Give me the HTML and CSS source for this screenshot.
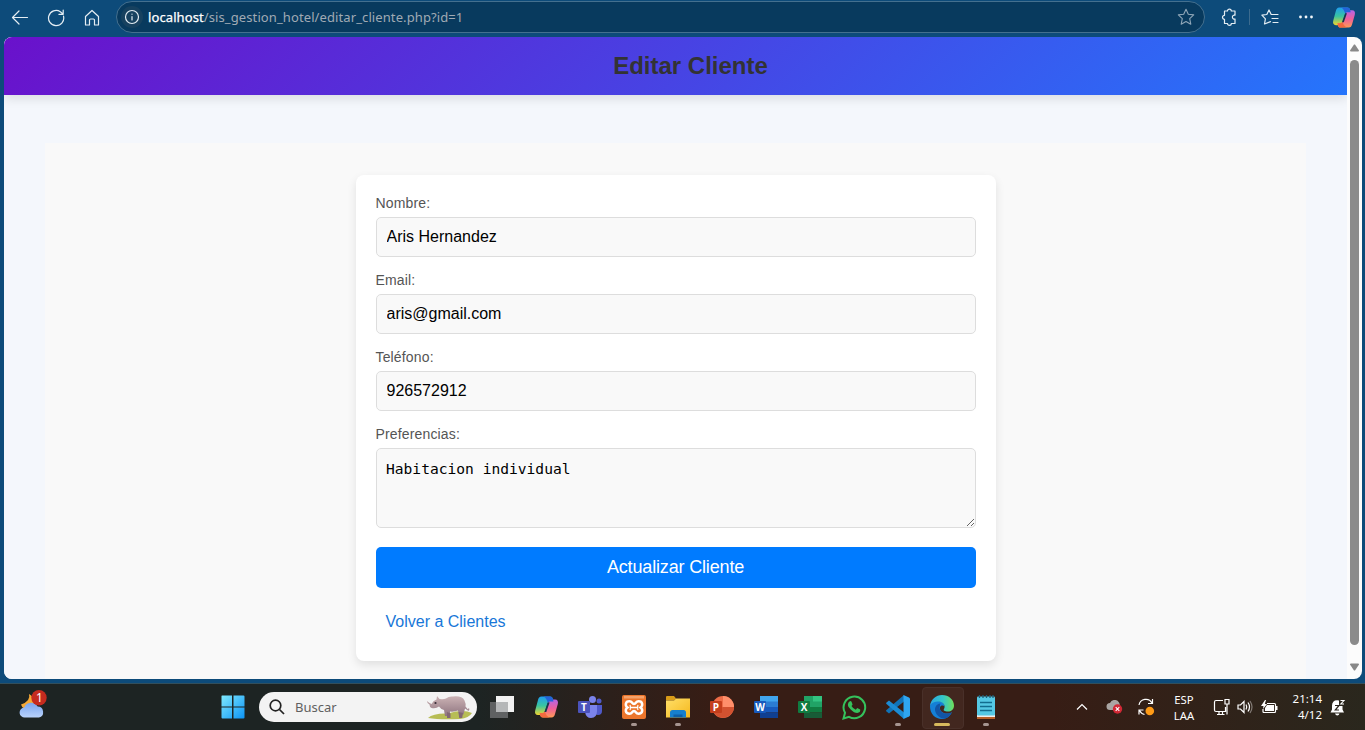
FILE: index.html
```html
<!DOCTYPE html>
<html lang="es">
<head>
<meta charset="utf-8">
<title>Editar Cliente</title>
<link rel="stylesheet" href="styles.css">
</head>
<body>
<svg class="defs" width="0" height="0">
  <defs>
    <linearGradient id="cpA" x1="0" y1="0" x2="0" y2="1"><stop offset="0" stop-color="#1f9df0"/><stop offset=".5" stop-color="#39c5a0"/><stop offset="1" stop-color="#f0d52e"/></linearGradient>
    <linearGradient id="cpB" x1="0" y1="0" x2="0" y2="1"><stop offset="0" stop-color="#b364e8"/><stop offset=".5" stop-color="#ef5f9b"/><stop offset="1" stop-color="#ff9a55"/></linearGradient>
    <linearGradient id="win" x1="0" y1="0" x2="1" y2="1"><stop offset="0" stop-color="#7feaff"/><stop offset="1" stop-color="#0c93f5"/></linearGradient>
    <linearGradient id="cloud" x1="0" y1="0" x2="0" y2="1"><stop offset="0" stop-color="#79a5ef"/><stop offset="1" stop-color="#b9d2fb"/></linearGradient>
    <linearGradient id="folder" x1="0" y1="0" x2="1" y2="1"><stop offset="0" stop-color="#ffdf68"/><stop offset="1" stop-color="#f5b81d"/></linearGradient>
    <linearGradient id="edgeTop" x1="0" y1="0" x2="1" y2="0"><stop offset="0" stop-color="#2aa8e2"/><stop offset=".55" stop-color="#35c6c8"/><stop offset="1" stop-color="#6fe05a"/></linearGradient>
    <linearGradient id="rhino" x1="0" y1="0" x2="0" y2="1"><stop offset="0" stop-color="#ccb3b5"/><stop offset="1" stop-color="#8f7580"/></linearGradient>
    <symbol id="copilot" viewBox="0 0 24 22">
      <path d="M7 .5h8.500c2 0 2.500 1 3 3l.5 2h-3c-2 0-2.600 1-3.100 2.500L10 16.500c-.6 1.800-1.300 2.500-3 2.500H3.500C1 19 0 17 .7 14.500L3.500 4C4 2 5 .5 7 .5z" fill="url(#cpA)"/>
      <path d="M17 21.500H8.500c-2 0-2.500-1-3-3l-.3-1.500h2.500c2 0 2.600-1 3.100-2.500L14 6c.6-1.800 1.300-2.500 3-2.500h3.500C23 3.500 24 5.500 23.300 8L20.500 18c-.5 2-1.500 3.500-3.500 3.500z" fill="url(#cpB)"/>
      <path d="M9 .5h6.500c2 0 2.500 1 3 3l.5 2h-3c-1.500 0-2.200.6-2.700 1.500C12.300 4 11.500 1.500 9 .5z" fill="#2463d8"/>
      <path d="M15 21.500H8.500c-2 0-2.500-1-3-3L5.200 17h2.500c1.500 0 2.200-.6 2.700-1.500.8 3 2.100 5 4.600 6z" fill="#f36a3e"/>
      <path class="gap" d="M13.200 6.500l1.900 0-3.300 9.500-1.900 0z"/>
    </symbol>
  </defs>
</svg>
<div class="desktop">
  <div class="toolbar">
    <div class="nav">
      <svg width="18" height="18" viewBox="0 0 18 18"><path d="M16.500 8.500H1.500M8 2L1.500 8.500 8 15"/></svg>
      <svg width="18" height="18" viewBox="0 0 18 18"><path d="M16.500 7.200A7.600 7.600 0 1 1 13.300 2.700L16 5M16.200 1v4.300h-4.300"/></svg>
      <svg width="18" height="18" viewBox="0 0 18 18"><path d="M2.500 7.500L9 1.500l6.500 6V16H11.500v-5q0-1-1-1h-3q-1 0-1 1v5h-4z"/></svg>
    </div>
    <div class="address">
      <span class="info"><svg width="16" height="16" viewBox="0 0 16 16"><circle cx="8" cy="8" r="6.500"/><path d="M8 7.500V11M8 5v.2"/></svg></span>
      <span class="url"><b>localhost</b>/sis_gestion_hotel/editar_cliente.php?id=1</span>
      <svg class="star" width="18" height="18" viewBox="0 0 18 18"><path d="M9 1.300l2.300 5 5.400.6-4 3.700 1.100 5.600L9 13.500l-4.800 2.700 1.100-5.600-4-3.700 5.400-.6z"/></svg>
    </div>
    <div class="actions">
      <svg class="puzzle" width="18" height="18" viewBox="0 0 18 18"><path d="M4.500 3h3a1.900 1.900 0 0 1 3.800 0H15v4.200a2 2 0 1 0 0 3.800v4.500h-3.700a1.900 1.900 0 0 1-3.800 0h-3v-4.200a2 2 0 1 1 0-4z"/></svg>
      <span class="divider"></span>
      <svg class="favs" width="18" height="18" viewBox="0 0 18 18"><path d="M9.500 13.600L3.500 16l.9-5.200L.9 7.200l4.900-.7L8 2l2.200 4.500H17M11 10.500h6M12 14.500h5"/></svg>
      <svg class="dots" width="16" height="18" viewBox="0 0 16 18"><circle cx="2.500" cy="9" r="1.400"/><circle cx="8" cy="9" r="1.400"/><circle cx="13.500" cy="9" r="1.400"/></svg>
      <svg class="copilot" width="24" height="21"><use href="#copilot"/></svg>
    </div>
  </div>

  <div class="window">
    <div class="page">
      <header class="header"><h2>Editar Cliente</h2></header>
      <main class="container">
        <form class="card">
          <label for="nombre">Nombre:</label>
          <input id="nombre" type="text" value="Aris Hernandez">
          <label for="email">Email:</label>
          <input id="email" type="text" value="aris@gmail.com">
          <label for="telefono">Teléfono:</label>
          <input id="telefono" type="text" value="926572912">
          <label for="pref">Preferencias:</label>
          <textarea id="pref" spellcheck="false">Habitacion individual</textarea>
          <button type="button">Actualizar Cliente</button>
          <a class="back">Volver a Clientes</a>
        </form>
      </main>
    </div>
    <div class="scrollbar">
      <svg width="9" height="8" viewBox="0 0 9 8"><path d="M4 .5h1l4 6q0 1-1 1H1q-1 0-1-1z"/></svg>
      <div class="thumb"></div>
      <svg width="9" height="8" viewBox="0 0 9 8"><path d="M1 .5h7q1 0 1 1l-4 6H4l-4-6q0-1 1-1z"/></svg>
    </div>
  </div>

  <div class="taskbar">
    <div class="weather">
      <svg width="30" height="30" viewBox="0 0 30 30">
        <path d="M11 4q2 7-8 10.500 1.500 5 8 5 6-2 5-8.500Q15 6 11 4z" fill="#f6a935"/>
        <path d="M7 27.500a5 5 0 0 1-.8-10 7.500 7.500 0 0 1 13.500-1A5.600 5.600 0 0 1 21 27.500z" fill="url(#cloud)"/>
        <circle cx="21" cy="7.700" r="7.700" fill="#c52b1f"/>
        <text x="21.500" y="12" text-anchor="middle" class="badge-text">1</text>
      </svg>
    </div>
    <div class="start"><svg width="24" height="24" viewBox="0 0 24 24"><path d="M.5 1q0-.5.500-.5h10v11H.5zM12.500.5h10q1 0 1 1v10h-11zM.5 12.500h10.500v11H1.500q-1 0-1-1zM12.500 12.500h11v10q0 1-1 1h-10z" fill="url(#win)"/></svg></div>
    <div class="search">
      <svg width="16" height="16" viewBox="0 0 16 16"><circle cx="6.500" cy="6.500" r="5.300"/><path d="M10.500 10.500L15 15"/></svg>
      <span>Buscar</span>
      <svg class="rhino" width="46" height="26" viewBox="0 0 46 26">
        <path d="M1 24q5-5 20-4.500 15-4.500 24-.5-3 5-12 6-20 1-32-1z" fill="#b7bd55"/>
        <path d="M0 7q2 2 4.500 3Q6 6.500 9.500 5.500L10 2l2.500 3q4 .5 6.500-.5 3-2.500 7-2 9-1 11.500 4 1.500 3 1 6l2.500 3 .5-1.500 1 1-1 2-3.500-2.500-1.500 6h-4.500l-1-4q-4 1.500-8 1v4.500h-5l-1-6q-3-.5-5-3.500-3 2.500-7.500 1.500-2-1-2-3.500Q0 9.500 0 7z" fill="url(#rhino)"/>
        <path d="M20 18v6h3.500v-4.500M31.500 18l.7 6h3l.8-5" fill="#826874"/><circle cx="8.500" cy="9" r="1.100" fill="#382d37"/>
      </svg>
    </div>
    <div class="apps">
      <div class="app"><svg width="24" height="24" viewBox="0 0 24 24"><path d="M6 1h18v16H6z" fill="#f2f2f2"/><path d="M0 7h18v16H0z" fill="#5f6162"/><path d="M6 7h12v10H6z" fill="#b5b7b8"/></svg></div>
      <div class="app"><svg width="25" height="22"><use href="#copilot"/></svg></div>
      <div class="app"><svg width="24" height="24" viewBox="0 0 24 24"><circle cx="14.500" cy="4.500" r="3.500" fill="#7b83eb"/><circle cx="21" cy="6" r="2.500" fill="#5059c9"/><path d="M17 10h7v6q0 4-4 4-3 0-4-3z" fill="#5059c9"/><path d="M8 10h11v6q0 7-6 7-5 0-6-6z" fill="#7b83eb"/><rect y="6" width="12" height="12" rx="1" fill="#4b53bc"/><text x="6" y="15.500" class="tile-text">T</text></svg></div>
      <div class="app run"><svg width="24" height="24" viewBox="0 0 24 24"><rect width="24" height="24" rx="2" fill="#ec762c"/><path d="M2 1h20v2.500H2z" fill="#f4a26b"/><path d="M7.500 6.300c3 0 2.300 2.700 4.500 2.700s1.500-2.700 4.500-2.700c4.500 0 4.500 4.500 2 6.200 2.500 1.700 2.500 6.200-2 6.200-3 0-2.300-2.700-4.500-2.700s-1.500 2.700-4.500 2.700c-4.500 0-4.500-4.500-2-6.200-2.500-1.700-2.500-6.200 2-6.200z" fill="none" stroke="#fff" stroke-width="2.500"/><path d="M8 10q1 2.500 0 5M16 10q-1 2.500 0 5M8.500 12.500h7" fill="none" stroke="#fff" stroke-width="1.300"/></svg></div>
      <div class="app run"><svg width="24" height="24" viewBox="0 0 24 24"><path d="M0 2q0-1 1-1h7l2 2.500-2 2H0z" fill="#d89b18"/><path d="M0 5.500h8l2-2h14V22.500H0z" fill="url(#folder)"/><path d="M4 22.500v-5q0-2.500 2.500-2.500h11q2.500 0 2.500 2.500v5z" fill="#167fce"/><path d="M7.500 22v-2.500h9V22z" fill="#0d5fa8"/></svg></div>
      <div class="app"><svg width="24" height="24" viewBox="0 0 24 24"><circle cx="13" cy="12" r="11" fill="#ed6c47"/><path d="M13 1a11 11 0 0 1 11 11H13z" fill="#ff8f6b"/><path d="M24 12a11 11 0 0 1-21.500 3L13 12z" fill="#d35230"/><rect y="6" width="12" height="12" rx="1" fill="#c43e1c"/><text x="6" y="15.500" class="tile-text">P</text></svg></div>
      <div class="app"><svg width="24" height="24" viewBox="0 0 24 24"><path d="M6 1h18v6H6z" fill="#41a5ee"/><path d="M6 6.500h18V12H6z" fill="#2b7cd3"/><path d="M6 12h18v5.500H6z" fill="#185abd"/><path d="M6 17.500h18V23H6z" fill="#103f91"/><rect y="6" width="12" height="12" rx="1" fill="#185abd"/><text x="6" y="15.500" class="tile-text">W</text></svg></div>
      <div class="app"><svg width="24" height="24" viewBox="0 0 24 24"><path d="M6 1h9v6H6z" fill="#21a366"/><path d="M15 1h9v6h-9z" fill="#33c481"/><path d="M6 6.500h18V12H6z" fill="#21a366"/><path d="M6 12h18v5.500H6z" fill="#107c41"/><path d="M6 17.500h18V23H6z" fill="#185c37"/><rect y="6" width="12" height="12" rx="1" fill="#107c41"/><text x="6" y="15.500" class="tile-text">X</text></svg></div>
      <div class="app"><svg width="25" height="25" viewBox="0 0 25 25"><path d="M1.500 23.500l1.500-5.700a10.800 10.800 0 1 1 4 4z" fill="none" stroke="#35c25c" stroke-width="2"/><path d="M7.500 6.500q1-.8 1.900 0l1.100 2.700q.2.600-1 1.800 1.500 2.700 4.300 3.700l1.400-1.700 3 1.500q.5 3-3 3.500-3 0-6.500-3.500T6 9q.2-1.600 1.500-2.500z" fill="#35c25c"/></svg></div>
      <div class="app run"><svg width="24" height="24" viewBox="0 0 24 24"><path d="M18 0v6.500L3 18.500.5 16.500q-.8-.8 0-1.500z" fill="#1073b8"/><path d="M18 24v-6.500L3 5.500.5 7.500q-.8.800 0 1.500z" fill="#1b8bd4"/><path d="M17.500 0l5.500 2.500q1 .5 1 1.500v16q0 1-1 1.500L17.500 24z" fill="#2fa5f0"/></svg></div>
      <div class="app active"><svg width="24" height="24" viewBox="0 0 24 24"><path d="M0 11.500C0 7 4 5.500 8.500 6c4 .5 6 2.500 6 5.500-1-1.500-4-1.500-4.500 1-.5 3.500 3 6 6.500 6 2.500 0 4-.5 5.500-1.500C20 21.500 16 24 12 24 5 24 0 18.500 0 11.500z" fill="#1580d6"/><path d="M10.500 8.500C6 9 4 13 5.500 17c1.500 4 5 6.500 9 6.700 3.500-1 6-3.300 7.300-6.400-5 3-11.300 1-12-3.500-.3-2 .2-4 .7-5.300z" fill="#1155a6"/><path d="M0 11C1 4 6 0 12 0c7 0 12 5 12 10.500 0 4-3 6-6 6-3.500 0-5-1-4-2.500 2-3.500-1-7.500-5.500-7.500C5 6.500 1.500 7.500 0 11z" fill="url(#edgeTop)"/></svg></div>
      <div class="app run"><svg width="20" height="24" viewBox="0 0 20 24"><path d="M1 20h18v4H1z" fill="#b75f28"/><path d="M1 19h18v3H1z" fill="#eee"/><rect x="1" y="1.500" width="18" height="19" rx="1" fill="#55c8e4"/><path d="M3.500 0v3M7 0v3M10.500 0v3M14 0v3M17 0v3" stroke="#1f5f77" stroke-width="1.300"/><path d="M4 7.500h12M4 11.500h12M4 15.500h12" stroke="#126c8e" stroke-width="1.500"/></svg></div>
    </div>
    <div class="tray">
      <svg class="chev" width="12" height="8" viewBox="0 0 12 8"><path d="M1 6.500l5-5 5 5"/></svg>
      <svg class="onedrive" width="17" height="14" viewBox="0 0 17 14"><path d="M4 10a3.500 3.500 0 0 1 0-7 5 5 0 0 1 9-.5q2 3-1 7.500z" fill="#aaa5a3"/><circle cx="11.500" cy="9" r="4.700" fill="#d22835"/><path d="M9.700 7.200l3.600 3.600M13.300 7.200L9.700 10.800" stroke="#fff" stroke-width="1.100"/></svg>
      <svg class="sync" width="18" height="18" viewBox="0 0 18 18"><path d="M2 7a7 7 0 0 1 13-2M15.500 1v4.500H11M2 16.500V12h4.500M2.500 12.500q2 3.500 5 4"/><circle cx="12.800" cy="13" r="4.300" fill="#ff9b17" stroke="none"/></svg>
      <div class="lang"><span>ESP</span><span>LAA</span></div>
      <svg class="net" width="17" height="18" viewBox="0 0 17 18"><path d="M10 2.500H3q-1.500 0-1.500 1.500v8q0 1.500 1.500 1.500h9.500V9M4 16.500h7.500M6 13.500v3M9.500 13.500v3M12 1.500h4v4.500h-4zM14 6v10.500"/></svg>
      <svg class="vol" width="16" height="14" viewBox="0 0 16 14"><path d="M1 5h2.500L7 1.500v11L3.500 9H1zM9 4.500q1.500 2.500 0 5M11 2.500q3 4.500 0 9"/><path d="M13 1q4 6 0 12" opacity=".4"/></svg>
      <svg class="bat" width="17" height="14" viewBox="0 0 17 14"><path d="M6 3.500h7.500q1 0 1 1v7q0 1-1 1H3q-1 0-1-1V9"/><path d="M6 5h7v6H4V8zM15 6h1.500v4H15zM4 0L0 6h2.500L2 9l4-5H3.800L5 0z" fill="#fff" stroke="none"/></svg>
      <div class="clock"><span>21:14</span><span>4/12</span></div>
      <svg class="bell" width="16" height="17" viewBox="0 0 16 17"><path d="M9 1.500Q2 .5 2 7v3.500L.5 13.500h13.500L12.500 10.500V7H9zM5 14.500h4.500q-.5 2-2.200 2t-2.300-2z" fill="#fff"/><path d="M10.500 1.500H14l-3.200 3.500H14" fill="none" stroke="#fff" stroke-width="1.100"/><path d="M5 6.500h4l-3.700 4.500H9" fill="none" stroke="#2b251d" stroke-width="1.200"/></svg>
    </div>
  </div>
</div>
</body>
</html>
```
FILE: styles.css
```css
* { box-sizing: border-box; }
body { margin: 0; overflow: hidden; font-family: "Liberation Sans", Arial, sans-serif; }
svg { display: block; flex: none; }
.defs { position: absolute; }
.gap { fill: #15364c; }
.desktop { width: 1365px; height: 730px; display: flex; flex-direction: column; background: #0d4b7a; }

.toolbar { height: 37px; display: flex; padding-top: 1px; flex: none; }
.toolbar svg { fill: none; stroke: #e4edf3; stroke-width: 1.2; stroke-linejoin: round; stroke-linecap: round; }
.nav { width: 116px; height: 33px; display: flex; align-items: center; gap: 18px; padding-left: 11px; }
.address { width: 1089px; height: 32px; border: 1px solid #44708f; border-radius: 16px; background: #083a5e; display: flex; align-items: center; padding: 0 9px 0 4px; }
.info { width: 22px; height: 22px; border-radius: 50%; background: #17415f; display: grid; place-items: center; }
.url { flex: 1; margin-left: 5px; font: 13px "Noto Sans", sans-serif; letter-spacing: .1px; color: #a0aab4; white-space: nowrap; }
.url b { font-weight: 400; color: #fff; -webkit-text-stroke: .25px #fff; }
.toolbar .star { stroke: #8fa6b7; stroke-width: 1.1; }
.actions { flex: 1; height: 32px; display: flex; align-items: center; padding-left: 15px; }
.divider { width: 1px; height: 16px; background: #3c6b8e; margin: 0 11px; }
.dots { margin: 0 18px 0 19px; }
.toolbar .dots circle { fill: #f2f7fa; stroke: none; }
.toolbar .copilot { stroke: none; }

.window { width: 1358px; height: 642px; margin-left: 4px; flex: none; display: flex; border-radius: 8px; overflow: hidden; background: #fcfcfc; }
.page { width: 1343px; background: #f4f7fc; overflow: hidden; }
.header { height: 58px; padding-left: 30px; background: linear-gradient(135deg, #6a11cb, #2575fc); box-shadow: 0 4px 10px rgba(0,0,0,.1); display: flex; align-items: center; justify-content: center; }
.header h2 { margin: 0; font-size: 24px; line-height: 28px; color: #333; }
.container { margin: 48px 41px 0; height: 560px; padding-top: 32px; background: #f9f9f9; }
.card { width: 640px; height: 486px; margin: 0 auto; padding: 20px; border-radius: 8px; background: #fff; box-shadow: 0 4px 10px rgba(0,0,0,.1); }
.card label { display: block; height: 22px; font-size: 14px; line-height: 16px; letter-spacing: .15px; color: #555; }
.card input, .card textarea { display: block; width: 600px; margin: 0 0 15px; padding: 10px; border: 1px solid #ddd; border-radius: 5px; background: #f9f9f9; color: #000; outline: none; }
.card input { height: 40px; font: 16px "Liberation Sans", Arial, sans-serif; }
.card textarea { height: 80px; padding: 11px 9.5px; margin-bottom: 19px; font: 14.6px/18px "DejaVu Sans Mono", monospace; resize: vertical; }
.card button { display: block; width: 600px; height: 41px; padding: 0; border: 0; border-radius: 5px; background: #007bff; color: #fff; font: 18px "Liberation Sans", Arial, sans-serif; letter-spacing: -.16px; }
.back { display: block; margin: 24px 10px 0; font-size: 16px; line-height: 19px; color: #1877d8; }
.scrollbar { width: 15px; display: flex; flex-direction: column; align-items: center; padding: 7px 0; gap: 8px; }
.scrollbar svg { fill: #888; }
.thumb { width: 9px; height: 585px; border-radius: 5px; background: #8b8b8b; margin-bottom: 10px; }

.taskbar { height: 47px; margin-top: 4px; display: flex; align-items: center; border-top: 1px solid #324f5c; background: linear-gradient(90deg, #1d2423 0, #1d2423 35%, #371d15 52%, #371d15 77%, #2a271d 100%); color: #fff; }
.weather { width: 221px; height: 35px; padding-left: 18px; }
.badge-text { fill: #fff; font: 12px "Noto Sans", sans-serif; }
.start { width: 38px; }
.search { width: 218px; height: 30px; border-radius: 15px; background: #f3f3f3; display: flex; align-items: center; padding: 0 4px 0 10px; color: #606060; font: 13px "Noto Sans", sans-serif; }
.search > svg:first-child { fill: none; stroke: #222; stroke-width: 1.7; }
.search span { flex: 1; margin-left: 10px; }
.apps { display: flex; margin-left: 3px; }
.app { width: 44px; height: 46px; display: flex; align-items: center; justify-content: center; position: relative; }
.tile-text { fill: #fff; font: bold 10px "Open Sans", sans-serif; text-anchor: middle; }
.run::after, .active::after { content: ""; position: absolute; bottom: 4px; width: 6px; height: 3px; border-radius: 2px; background: #a69590; }
.active::before { content: ""; position: absolute; left: 2px; top: 3px; width: 40px; height: 40px; border: 1px solid #493029; border-radius: 4px; background: #42271f; }
.active svg { position: relative; }
.active::after { width: 16px; background: #d7b95d; }
.tray { flex: 1; margin-left: 68px; display: flex; align-items: center; font: 11.5px/15px "Noto Sans", sans-serif; }
.tray svg { fill: none; stroke: #fff; stroke-width: 1.2; }
.tray .onedrive, .tray .bell { stroke: none; }
.onedrive { margin-left: 18px; }
.sync { margin-left: 14px; }
.lang { width: 24px; margin-left: 17px; display: flex; flex-direction: column; align-items: center; line-height: 16px; padding-top: 1px; font-size: 11.3px; }
.net { margin-left: 17px; }
.vol { margin-left: 7px; }
.bat { margin-left: 8px; }
.clock { width: 44px; display: flex; flex-direction: column; align-items: flex-end; line-height: 16px; }
.bell { margin-left: 8px; }
```
